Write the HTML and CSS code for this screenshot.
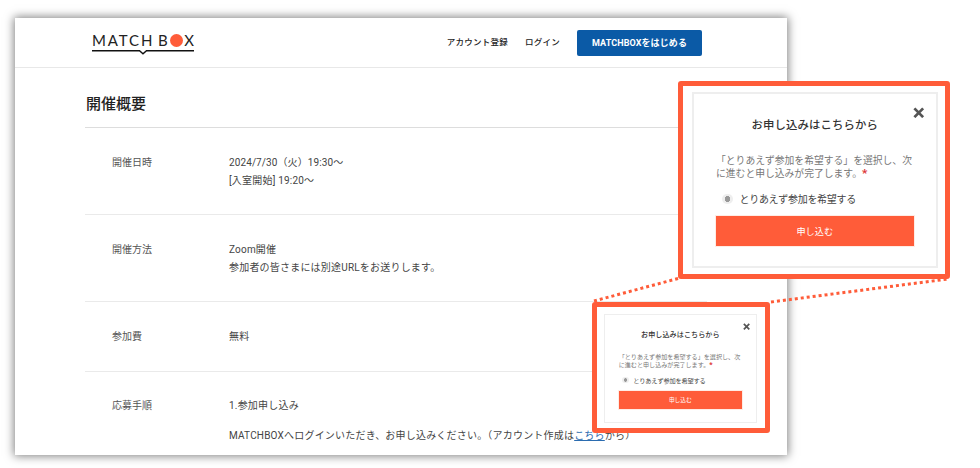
FILE: index.html
```html
<!DOCTYPE html>
<html lang="ja">
<head>
<meta charset="utf-8">
<title>MATCHBOX</title>
<link rel="stylesheet" href="styles.css">
</head>
<body>
<div class="stage">
  <div class="window">
    <header class="site-header">
      <a class="logo">
        <span class="logo-word"><span class="logo-text">MATCH B</span><span class="logo-dot"></span><span class="logo-end">X</span></span>
        <svg class="logo-line" width="102" height="5" viewBox="0 0 102 5"><path d="M0 .75H47.5L51 3.8 54.5 .75H102" fill="none" stroke="#111" stroke-width="1.4"/></svg>
      </a>
      <nav class="site-nav">
        <a class="nav-link">アカウント登録</a>
        <a class="nav-link">ログイン</a>
        <a class="nav-button">MATCHBOXをはじめる</a>
      </nav>
    </header>
    <main class="content">
      <h1 class="page-title">開催概要</h1>
      <section class="row">
        <div class="row-label">開催日時</div>
        <div class="row-value"><p class="date-line">2024/7/30（火）19:30～</p><p>[入室開始] 19:20～</p></div>
      </section>
      <section class="row">
        <div class="row-label">開催方法</div>
        <div class="row-value"><p>Zoom開催</p><p>参加者の皆さまには別途URLをお送りします。</p></div>
      </section>
      <section class="row row-single">
        <div class="row-label">参加費</div>
        <div class="row-value"><p>無料</p></div>
      </section>
      <section class="row row-steps">
        <div class="row-label">応募手順</div>
        <div class="row-value"><p>1.参加申し込み</p><p class="para-gap">MATCHBOXへログインいただき、お申し込みください。（アカウント作成は<a class="text-link">こちら</a>から）</p></div>
      </section>
    </main>
  </div>

  <svg class="connector" width="980" height="468" viewBox="0 0 980 468">
    <path d="M594 301L680 278M771 302L948 279" fill="none" stroke="#ff5c39" stroke-width="3" stroke-dasharray="3 3"/>
  </svg>

  <aside class="callout callout-large">
    <div class="modal">
      <svg class="modal-close" viewBox="0 0 10 10"><path d="M1.2 1.2L8.8 8.8M8.8 1.2L1.2 8.8" fill="none" stroke="#555" stroke-width="2.4"/></svg>
      <h2 class="modal-title">お申し込みはこちらから</h2>
      <p class="modal-text">「とりあえず参加を希望する」を選択し、次<br>に進むと申し込みが完了します。<span class="required">*</span></p>
      <div class="modal-option"><span class="radio"></span><span>とりあえず参加を希望する</span></div>
      <div class="modal-submit">申し込む</div>
    </div>
  </aside>

  <aside class="callout callout-small">
    <div class="modal">
      <svg class="modal-close" viewBox="0 0 10 10"><path d="M1.2 1.2L8.8 8.8M8.8 1.2L1.2 8.8" fill="none" stroke="#555" stroke-width="2.4"/></svg>
      <h2 class="modal-title">お申し込みはこちらから</h2>
      <p class="modal-text">「とりあえず参加を希望する」を選択し、次<br>に進むと申し込みが完了します。<span class="required">*</span></p>
      <div class="modal-option"><span class="radio"></span><span>とりあえず参加を希望する</span></div>
      <div class="modal-submit">申し込む</div>
    </div>
  </aside>
</div>
</body>
</html>
```

FILE: styles.css
```css
* { box-sizing: border-box; }
html, body { margin: 0; padding: 0; background: #fff; }
body {
  font-family: "Roboto", "Noto Sans CJK JP", sans-serif;
  color: #444;
  overflow: hidden;
}
.stage { position: relative; width: 980px; height: 468px; padding: 18px 0 0 15px; overflow: hidden; }

.window {
  width: 772px;
  height: 437px;
  background: #fff;
  overflow: hidden;
  box-shadow: 0 0 9px 1px rgba(0, 0, 0, .5);
}

.site-header {
  height: 50px;
  padding: 0 85px 0 77px;
  display: flex;
  align-items: center;
  justify-content: space-between;
  border-bottom: 1px solid #e8e8e8;
}
.logo { display: flex; flex-direction: column; width: 102px; margin-top: 3px; }
.logo-word {
  display: flex;
  align-items: center;
  font-family: "Lato", sans-serif;
  font-size: 15px;
  line-height: 15px;
  color: #222;
  white-space: pre;
}
.logo-text { flex: none; letter-spacing: 1.9px; word-spacing: -2px; }
.logo-dot {
  flex: none;
  width: 13px;
  height: 13px;
  border-radius: 50%;
  background: #ff5c39;
}
.logo-end { margin-left: auto; }
.logo-line { display: block; margin-top: 2px; }

.site-nav { display: flex; align-items: center; gap: 17px; }
.nav-link { font-size: 8.5px; font-weight: 500; letter-spacing: .25px; color: #222; line-height: 1; white-space: nowrap; }
.nav-button {
  width: 125px;
  height: 26px;
  display: flex;
  align-items: center;
  justify-content: center;
  border-radius: 2px;
  background: #0b5aa6;
  color: #fff;
  font-size: 9px;
  font-weight: 700;
  letter-spacing: .1px;
}

.content { width: 622px; margin-left: 70px; }
.page-title {
  margin: 0;
  height: 60px;
  padding: 25px 0 0 1px;
  font-size: 15px;
  line-height: 22px;
  font-weight: 500;
  color: #222;
  border-bottom: 1px solid #ddd;
}
.row {
  display: flex;
  padding: 26px 0 24px 27px;
  border-bottom: 1px solid #eaeaea;
  font-size: 10px;
  line-height: 18px;
}
.row-single { padding-bottom: 25px; }
.row-steps { padding-top: 25px; }
.row-label { width: 117px; flex: none; color: #555; }
.row-value { flex: 1; min-width: 0; white-space: nowrap; letter-spacing: .2px; }
.row-value p { margin: 0; }
.row-value .date-line { letter-spacing: .1px; }
.row-value .para-gap { margin-top: 12px; }
.text-link { color: #2b6cb0; text-decoration: underline; }

.connector { position: absolute; left: 0; top: 0; pointer-events: none; }

.callout {
  position: absolute;
  display: flex;
  background: #fff;
  border: 5px solid #ff5c39;
  border-radius: 3px;
}
.callout-large { left: 678px; top: 81px; width: 272px; height: 198px; padding: 6px 7px 6px 9px; font-size: 10px; }
.callout-small { left: 592px; top: 302px; width: 178px; height: 131px; padding: 7px 8px 5px 7px; font-size: 6.22px; }

.modal {
  position: relative;
  flex: 1;
  min-width: 0;
  padding: 2.2em 2.25em 0 2.2em;
  border: 2px solid #eee;
  background: #fff;
}
.callout-small .modal { border-width: 1.5px; }
.modal-close { position: absolute; top: 1.25em; right: 1.15em; width: 1.15em; height: 1.15em; }
.callout-small .modal-close { right: .9em; }
.modal-title {
  margin: 0;
  font-size: 1.14em;
  line-height: 1.58;
  font-weight: 500;
  letter-spacing: .01em;
  text-align: center;
  color: #333;
}
.modal-text {
  margin: 2.15em 0 0;
  font-size: .98em;
  line-height: 1.32;
  color: #777;
  white-space: nowrap;
}
.required { color: #d33; font-weight: 700; font-size: 1.2em; line-height: 0; }
.modal-option {
  display: flex;
  align-items: center;
  gap: .7em;
  margin-top: 1.1em;
  padding-left: .6em;
  height: 1.4em;
  font-size: 1em;
  color: #444;
  letter-spacing: -.03em;
  white-space: nowrap;
}
.radio {
  width: 1.05em;
  height: 1.05em;
  flex: none;
  border-radius: 50%;
  background: radial-gradient(circle, #999 0 .27em, #eee .3em);
}
.modal-submit {
  display: flex;
  align-items: center;
  justify-content: center;
  height: 3.26em;
  margin-top: 1.05em;
  background: #ff5c39;
  color: #fff;
  font-size: .92em;
  box-shadow: 0 0 0 1px rgba(255, 200, 180, .35);
}
```
